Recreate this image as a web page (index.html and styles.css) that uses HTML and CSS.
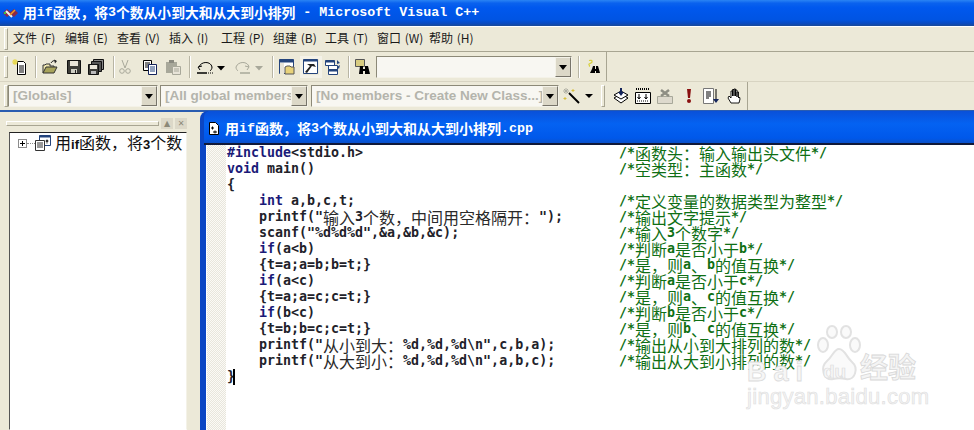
FILE: index.html
```html
<!DOCTYPE html>
<html lang="zh-CN">
<head>
<meta charset="utf-8">
<title>Microsoft Visual C++</title>
<link rel="stylesheet" href="styles.css">
</head>
<body>
<div class="app">
  <header class="titlebar">
    <svg class="ico16" viewBox="0 0 17 14"><path d="M1 7l4-4 3.500 3 3.500-3 4 4-4 4-3.500-3L5 11z" fill="#8a2a4a"/><path d="M4 5l6 6" stroke="#f0f0f0" stroke-width="2"/><path d="M13 4L8 9" stroke="#f0a020" stroke-width="1.500"/><path d="M2 7h2" stroke="#40c040" stroke-width="2"/></svg>
    <span class="title-text"><span class="cj">用</span>if<span class="cj">函数，将</span>3<span class="cj">个数从小到大和从大到小排列</span> - Microsoft Visual C++</span>
  </header>

  <nav class="bar menubar">
    <i class="grip"></i>
    <span class="menu">文件 (F)</span><span class="menu">编辑 (E)</span><span class="menu">查看 (V)</span><span class="menu">插入 (I)</span><span class="menu">工程 (P)</span><span class="menu">组建 (B)</span><span class="menu">工具 (T)</span><span class="menu">窗口 (W)</span><span class="menu">帮助 (H)</span>
  </nav>

  <div class="bar toolrow row1">
    <div class="tools tools1">
      <i class="grip"></i>
      <svg class="ico ml4" viewBox="0 0 16 16"><path d="M5.500 2.500h6l2 2v11h-8z" fill="#fff" stroke="#000"/><path d="M7 7h5M7 9h5M7 11h5M7 13h5" stroke="#000"/><path d="M3 0v6M0 3h6M1 1l4 4M5 1L1 5" stroke="#e8d850" stroke-width="1.200"/></svg>
      <i class="sep ml7"></i>
      <svg class="ico ml6" viewBox="0 0 16 16"><path d="M1 14V6h2l1-1h4v2h4v1" fill="#f0e8b0" stroke="#333"/><path d="M1 14l3-6h11l-3 6z" fill="#a8a45c" stroke="#333"/><path d="M9 4c1-2 3-3 5-2" fill="none" stroke="#222"/><path d="M12 .5l3 1.500-2 2.500z" fill="#222"/></svg>
      <svg class="ico ml8" viewBox="0 0 16 16"><path d="M1.500 1.500h13v13h-13z" fill="#3c3c38" stroke="#111"/><path d="M4 2h8v5H4z" fill="#e8e4d8"/><path d="M5 10h6v4H5z" fill="#cfcfc4"/><path d="M9 11h1v3H9z" fill="#222"/></svg>
      <svg class="ico ml6" viewBox="0 0 16 16"><path d="M5.500 .5h10v10h-10z" fill="#888" stroke="#111"/><path d="M3.500 2.500h10v10h-10z" fill="#555" stroke="#111"/><path d="M.5 5.500h10v10H.5z" fill="#3c3c38" stroke="#111"/><path d="M2 6h7v4H2z" fill="#e8e4d8"/><path d="M3 12h5v3H3z" fill="#bbb"/></svg>
      <i class="sep ml9"></i>
      <svg class="ico ml3" viewBox="0 0 16 16"><path d="M5 1l3 8M11 1L8 9" stroke="#a8a89a" fill="none"/><circle cx="5" cy="12" r="2.300" fill="none" stroke="#a8a89a"/><circle cx="11" cy="12" r="2.300" fill="none" stroke="#a8a89a"/></svg>
      <svg class="ico ml9" viewBox="0 0 16 16"><path d="M1.500 1.500h8v10h-8z" fill="#fff" stroke="#000"/><path d="M3 4h5M3 6h5M3 8h5" stroke="#000"/><path d="M6.500 5.500h8v10h-8z" fill="#fff" stroke="#14245c"/><path d="M8 8h5M8 10h5M8 12h5" stroke="#24447c"/></svg>
      <svg class="ico ml7" viewBox="0 0 16 16"><path d="M1 3h11v11H1z" fill="#a8a89a"/><path d="M4 1h5v3H4z" fill="#8a8a80"/><path d="M7.500 7.500h8v8h-8z" fill="#e8e4d8" stroke="#a8a89a"/><path d="M9 10h5M9 12h5" stroke="#a8a89a"/></svg>
      <i class="sep ml8"></i>
      <svg class="ico wide ml7" viewBox="0 0 30 16"><path d="M0 14h10" stroke="#000" stroke-width="1.500"/><path d="M11 14h5" stroke="#000" stroke-dasharray="1 1"/><path d="M1 8l2 3M1 8l4-1" stroke="#000" fill="none"/><path d="M2 8c2-6 12-6 13 0 0 2-1 3-2 4" fill="none" stroke="#000"/><path d="M20 7h8l-4 4.500z" fill="#000"/></svg>
      <svg class="ico wide ml7" viewBox="0 0 30 16"><path d="M6 14h10" stroke="#a8a89a" stroke-width="1.500"/><path d="M15 8c-1-6-11-6-13 0 0 2 1 3 2 4" fill="none" stroke="#a8a89a"/><path d="M15 8l-2 3M15 8l-4-1" stroke="#a8a89a" fill="none"/><path d="M21 7h8l-4 4.500z" fill="#a8a89a"/></svg>
      <i class="sep ml8"></i>
      <svg class="ico ml6" viewBox="0 0 16 16"><path d="M.5 .5h14v14H.5z" fill="#fff" stroke="#24447c"/><path d="M.5 .5h14v3H.5z" fill="#24447c"/><path d="M1 4h4v11H1z" fill="#e8e4d8"/><path d="M6 8l2-1h3l1 1h3v7H6z" fill="#e8d27a" stroke="#555"/></svg>
      <svg class="ico ml8 on" viewBox="0 0 16 16"><path d="M.5 .5h14v14H.5z" fill="#fff" stroke="#24447c"/><path d="M.5 .5h14v2H.5z" fill="#24447c"/><path d="M4 5h7l2 3-4-1-5 7-2-1 5-6z" fill="#222"/></svg>
      <svg class="ico ml6" viewBox="0 0 16 16"><path d="M.5 1.500h9v5h-9zM3.500 6.500h9v4h-9zM3.500 10.500h9v5h-9z" fill="#fff" stroke="#24447c"/><path d="M.5 1.500h9v2h-9zM3.500 10.500h9v2h-9z" fill="#24447c"/><path d="M12 1l3 3-3 1zM12 8l3-2-1 4z" fill="#24447c"/></svg>
      <i class="sep ml7"></i>
      <svg class="ico ml6" viewBox="0 0 16 16"><path d="M.5 .5h9v7h-9z" fill="#d8cc80" stroke="#555"/><path d="M5 7h3v3h2V7h3l2 8h-5v-3H8v3H4z" fill="#000"/></svg>
      <div class="combo find ml5"><span class="combo-text"></span><b class="drop"></b></div>
      <i class="sep ml6"></i>
      <svg class="ico ml7" viewBox="0 0 16 16"><path d="M3 1.500c4-1 4 2 1 3s1 2-1 3" fill="none" stroke="#d8d040" stroke-width="1.200"/><path d="M6 10l1-3h2v3h1V7h2l2 7h-4v-2H9v2H4z" fill="#000"/></svg>
    </div>
  </div>

  <div class="bar toolrow row2">
    <div class="tools tools2">
      <i class="grip"></i>
      <div class="combo c1"><span class="combo-text">[Globals]</span><b class="drop"></b></div>
      <div class="combo c2 ml2"><span class="combo-text">[All global members</span><b class="drop"></b></div>
      <div class="combo c3 ml3"><span class="combo-text">[No members - Create New Class...]</span><b class="drop"></b></div>
      <svg class="ico wide ml4" viewBox="0 0 30 16"><path d="M6 5l10 10" stroke="#000" stroke-width="2"/><path d="M3 0v6M0 3h6M1 1l4 4M5 1L1 5" stroke="#b0b0a4" stroke-width="1"/><path d="M10 1v3M8.500 2.500h3M2 9v3M.5 10.500h3" stroke="#d8c040"/><path d="M22 6h8l-4 4z" fill="#000"/></svg>
      <i class="grip ml8"></i>
      <svg class="ico ml8" viewBox="0 0 16 16"><path d="M1 10l7-4 7 4-7 5z" fill="#fff" stroke="#000"/><path d="M1 7l7-4 7 4-7 4z" fill="#fff" stroke="#000"/><path d="M8 0v6" stroke="#14245c" stroke-width="2"/><path d="M5 4h6L8 8z" fill="#14245c"/></svg>
      <svg class="ico ml6" viewBox="0 0 16 16"><path d="M.5 4.500h15v11H.5z" fill="#fff" stroke="#000"/><path d="M1 1h14" stroke="#000" stroke-dasharray="1 1" stroke-width="2"/><path d="M4 6v5M2.500 9L4 11l1.500-2M11 6v5M9.500 9l1.500 2 1.500-2" fill="none" stroke="#000"/><path d="M2 13h12" stroke="#000" stroke-dasharray="1 1"/></svg>
      <svg class="ico ml6" viewBox="0 0 16 16"><path d="M.5 8.500h15v7H.5z" fill="#ddd9cd" stroke="#a8a89a"/><path d="M4 2l8 6M12 2L4 8" stroke="#8e8e84" stroke-width="2.500"/></svg>
      <svg class="ico ml8" viewBox="0 0 16 16"><path d="M6 1h4l-1 9H7z" fill="#8a1010"/><circle cx="8" cy="13" r="2" fill="#8a1010"/></svg>
      <svg class="ico ml6" viewBox="0 0 16 16"><path d="M.5 .5h10v15H.5z" fill="#fff" stroke="#777"/><path d="M3 4h5M3 6h5M3 8h5M3 10h3" stroke="#000"/><path d="M13 1v12" stroke="#000"/><path d="M10 11h6l-3 4z" fill="#14245c"/></svg>
      <svg class="ico ml8" viewBox="0 0 16 16"><path d="M4 15l-3-5 1-2 2 2V3h1.500v5V1.500H7V8V1H8.500v7V2H10v7V4h1.500v6l1-1 .5 2-1 4z" fill="#fff" stroke="#000" stroke-width=".9"/></svg>
    </div>
  </div>

  <main class="workspace">
    <aside class="side">
      <div class="side-head">
        <i class="hgrip"></i>
        <b class="mini">▲</b><b class="mini">✕</b>
      </div>
      <div class="tree">
        <div class="tree-row">
          <i class="plus"></i><i class="dots"></i>
          <svg class="tree-ico" viewBox="0 0 16 16"><path d="M4.500 .5h11v10h-11z" fill="#fff" stroke="#24447c"/><path d="M4.500 .5h11v2h-11z" fill="#24447c"/><path d="M.5 5.500h9v10h-9z" fill="#fff" stroke="#333"/><path d="M2 8h6M2 10h6M2 12h6" stroke="#333"/><path d="M11 5h2v2h-2zM11 8h2" fill="#333" stroke="#333" stroke-width=".5"/></svg>
          <span class="tree-label">用<b>if</b>函数，将<b>3</b>个数</span>
        </div>
      </div>
    </aside>

    <section class="doc">
      <div class="doc-title">
        <svg class="doc-ico" viewBox="0 0 12 14"><path d="M1.500 .5h6l3 3v9h-9z" fill="#fff" stroke="#000"/><path d="M3 6h3M4.500 4.500v3M5 10h4M7 8.500v3" stroke="#000"/></svg>
        <span class="doc-name"><span class="cj">用</span>if<span class="cj">函数，将</span>3<span class="cj">个数从小到大和从大到小排列</span>.cpp</span>
      </div>
      <div class="editor">
        <div class="margin"></div>
        <div class="code">
          <div class="ln"><span class="src"><span class="kw">#include</span>&lt;stdio.h&gt;</span><span class="cm">/*<span class="cj">函数头：输入输出头文件</span>*/</span></div>
          <div class="ln"><span class="src"><span class="kw">void</span> main()</span><span class="cm">/*<span class="cj">空类型：主函数</span>*/</span></div>
          <div class="ln"><span class="src">{</span></div>
          <div class="ln"><span class="src in"><span class="kw">int</span> a,b,c,t;</span><span class="cm">/*<span class="cj">定义变量的数据类型为整型</span>*/</span></div>
          <div class="ln"><span class="src in">printf("<span class="cj">输入</span>3<span class="cj">个数，中间用空格隔开：</span>");</span><span class="cm">/*<span class="cj">输出文字提示</span>*/</span></div>
          <div class="ln"><span class="src in">scanf("%d%d%d",&amp;a,&amp;b,&amp;c);</span><span class="cm">/*<span class="cj">输入</span>3<span class="cj">个数字</span>*/</span></div>
          <div class="ln"><span class="src in"><span class="kw">if</span>(a&lt;b)</span><span class="cm">/*<span class="cj">判断</span>a<span class="cj">是否小于</span>b*/</span></div>
          <div class="ln"><span class="src in">{t=a;a=b;b=t;}</span><span class="cm">/*<span class="cj">是，则</span>a<span class="cj">、</span>b<span class="cj">的值互换</span>*/</span></div>
          <div class="ln"><span class="src in"><span class="kw">if</span>(a&lt;c)</span><span class="cm">/*<span class="cj">判断</span>a<span class="cj">是否小于</span>c*/</span></div>
          <div class="ln"><span class="src in">{t=a;a=c;c=t;}</span><span class="cm">/*<span class="cj">是，则</span>a<span class="cj">、</span>c<span class="cj">的值互换</span>*/</span></div>
          <div class="ln"><span class="src in"><span class="kw">if</span>(b&lt;c)</span><span class="cm">/*<span class="cj">判断</span>b<span class="cj">是否小于</span>c*/</span></div>
          <div class="ln"><span class="src in">{t=b;b=c;c=t;}</span><span class="cm">/*<span class="cj">是，则</span>b<span class="cj">、</span>c<span class="cj">的值互换</span>*/</span></div>
          <div class="ln"><span class="src in">printf("<span class="cj">从小到大：</span>%d,%d,%d\n",c,b,a);</span><span class="cm">/*<span class="cj">输出从小到大排列的数</span>*/</span></div>
          <div class="ln"><span class="src in">printf("<span class="cj">从大到小：</span>%d,%d,%d\n",a,b,c);</span><span class="cm">/*<span class="cj">输出从大到小排列的数</span>*/</span></div>
          <div class="ln"><span class="src caret">}</span></div>
        </div>
        <div class="mark">
          <svg class="paw" viewBox="0 0 46 58"><g fill="#f8f8f8" fill-opacity=".75" stroke="#e2e2e2" stroke-width="2"><ellipse cx="6" cy="20" rx="5" ry="7"/><ellipse cx="15" cy="7" rx="5" ry="6"/><ellipse cx="29" cy="7" rx="5" ry="6"/><ellipse cx="38" cy="20" rx="5" ry="7"/><path d="M22 24c-5 0-6 7-12 12-7 6-4 20 6 18 4-1 8-1 13 0 9 2 13-11 6-17-6-5-7-13-13-13z"/></g></svg>
          <span class="mk-baidu">Bai</span><span class="mk-du">du</span><span class="mk-jy">经验</span>
          <span class="mk-url">jingyan.baidu.com</span>
        </div>
      </div>
    </section>
  </main>
</div>
</body>
</html>
```
FILE: styles.css
```css
* { box-sizing: border-box; }
html, body { margin: 0; padding: 0; }
body { width: 974px; height: 430px; overflow: hidden; background: #ece9d8; font-family: "Noto Sans CJK SC", "Liberation Sans", sans-serif; }
.app { width: 974px; height: 430px; display: flex; flex-direction: column; overflow: hidden; }
.cj { display: inline-block; height: 16px; vertical-align: top; font-family: "Noto Sans CJK SC", sans-serif; font-weight: 400; font-size: 16px; letter-spacing: 0; line-height: 16px; }

.ml2 { margin-left: 2px; }
.ml3 { margin-left: 3px; }
.ml4 { margin-left: 4px; }
.ml5 { margin-left: 5px; }
.ml6 { margin-left: 6px; }
.ml7 { margin-left: 7px; }
.ml8 { margin-left: 8px; }
.ml9 { margin-left: 9px; }

.titlebar { height: 26px; flex: none; display: flex; align-items: center; gap: 4px; padding: 0 0 0 2px; background: linear-gradient(#2a84f4 0, #0a62ee 12%, #0058ee 30%, #0054e3 75%, #0a4ac0 90%, #1a4a98 100%); color: #fff; }
.ico16 { width: 17px; height: 14px; flex: none; }
.title-text { font: 700 13.33px/16px "Liberation Mono", monospace; white-space: pre; }
.title-text .cj { font-weight: 700; font-size: 13.8px; position: relative; top: -1px; }

.bar { background: #ece9d8; flex: none; }
.menubar { height: 26px; display: flex; align-items: center; padding-left: 4px; border-bottom: 1px solid #a8a592; box-shadow: inset 0 1px 0 #fff; }
.grip { display: block; width: 4px; height: 22px; flex: none; border: 1px solid; border-color: #fff #a8a592 #a8a592 #fff; }
.menubar .grip { margin-right: 5px; }
.menu { width: 52px; flex: none; font-size: 12px; color: #1a1a1a; white-space: pre; line-height: 18px; word-spacing: 1px; margin-top: -2px; }

.toolrow { display: flex; align-items: stretch; }
.row1 { height: 30px; border-bottom: 1px solid #d8d4c2; }
.row2 { height: 30px; border-bottom: 2px solid #2a5cb0; }
.tools { display: flex; align-items: center; padding-left: 4px; border-right: 1px solid #a8a592; }
.tools1 { width: 607px; }
.tools2 { width: 748px; }
.sep { display: block; width: 1px; height: 22px; flex: none; background: #b8b5a4; box-shadow: 1px 0 0 #fff; }
.ico { width: 16px; height: 16px; flex: none; }
.ico.wide { width: 30px; }
.ico.on { outline: 3px solid #f4f2e8; }

.combo { display: flex; align-items: stretch; height: 22px; flex: none; background: #fff; border: 1px solid; border-color: #8c8978 #f4f2e8 #f4f2e8 #8c8978; overflow: hidden; }
.combo-text { flex: 1; min-width: 0; padding-left: 4px; font: 700 13.5px/20px "Liberation Sans", sans-serif; color: #b4b4ac; white-space: nowrap; overflow: hidden; background: #f8f7f2; }
.drop { position: relative; width: 16px; flex: none; background: #dcd8c8; border: 1px solid; border-color: #f4f2e8 #77746a #77746a #f4f2e8; }
.drop::after { content: ""; position: absolute; left: 3px; top: 7px; border: 4px solid transparent; border-top: 5px solid #000; border-bottom: 0; }
.find { width: 196px; }
.c1 { width: 150px; }
.c2 { width: 148px; }
.c3 { width: 248px; }

.workspace { flex: 1; display: flex; min-height: 0; }
.side { width: 189px; flex: none; display: flex; flex-direction: column; padding-top: 5px; }
.side-head { height: 13px; display: flex; align-items: center; gap: 2px; padding: 0 2px 0 6px; margin-bottom: 2px; }
.hgrip { flex: 1; height: 5px; border: 1px solid; border-color: #fff #a8a592 #a8a592 #fff; }
.mini { width: 12px; height: 11px; font: 400 8px/11px "DejaVu Sans", sans-serif; color: #8c8978; text-align: center; background: #dcd8c8; }
.tree { flex: 1; margin-left: 9px; margin-right: 2px; background: #fff; border: 1px solid; border-color: #222 #f4f2e8 transparent #555; }
.tree-row { display: flex; align-items: center; height: 18px; margin-top: 1px; padding-left: 8px; }
.plus { position: relative; display: block; width: 9px; height: 9px; flex: none; border: 1px solid #8c8c8c; }
.plus::before { content: ""; position: absolute; left: 1px; top: 3px; width: 5px; height: 1px; background: #000; }
.plus::after { content: ""; position: absolute; left: 3px; top: 1px; width: 1px; height: 5px; background: #000; }
.dots { display: block; width: 8px; border-top: 1px dotted #888; flex: none; }
.tree-ico { width: 16px; height: 16px; flex: none; }
.tree-label { margin-left: 4px; font-size: 16px; color: #111; white-space: nowrap; line-height: 18px; }
.tree-label b { font: 700 13px/16px "Liberation Sans", sans-serif; }

.doc { flex: 1; margin-left: 11px; display: flex; flex-direction: column; min-width: 0; border-left: 6px solid #0b46c4; border-top-left-radius: 8px; background: linear-gradient(#0a5fe0, #0054e3); position: relative; margin-top: -1px; box-shadow: inset 1px 0 0 #0a3aa8; }
.doc-title { height: 34px; flex: none; display: flex; align-items: center; gap: 5px; color: #fff; border-bottom: 2px solid #101838; background: linear-gradient(#0a50d8, #0462f2 40%, #0058ea 85%, #0a50c8); margin-left: -2px; padding: 3px 0 0 4px; border-top-left-radius: 6px; }
.doc-ico { width: 12px; height: 14px; flex: none; }
.doc-name { font: 700 13.33px/16px "Liberation Mono", monospace; white-space: pre; }
.doc-name .cj { font-weight: 700; font-size: 14px; position: relative; top: -1px; }

.editor { flex: 1; position: relative; display: flex; background: #fff; overflow: hidden; min-height: 0; }
.margin { width: 19px; flex: none; margin-left: 1px; background: repeating-conic-gradient(#e8e6dc 0 25%, #fbfaf6 0 50%) 0 0 / 2px 2px; }
.code { flex: 1; }
.ln { display: flex; height: 16px; font: 700 13.3px/16px "DejaVu Sans Mono", monospace; color: #22222a; white-space: pre; margin-left: 1px; }
.src { width: 392px; flex: none; }
.src.in { padding-left: 32px; }
.src .cj { color: #2a2a2a; }
.kw { color: #1a1a78; }
.cm { color: #0f6f14; }
.caret { position: relative; }
.caret::after { content: ""; position: absolute; left: 6px; top: 0; width: 2px; height: 16px; background: #000; }

.mark { position: absolute; left: 541px; top: 180px; width: 180px; height: 84px; pointer-events: none; }
.paw { position: absolute; left: 70px; top: 0; width: 46px; height: 58px; }
.mk-baidu { position: absolute; left: 0; top: 32px; font: 700 27px/30px "Liberation Sans", sans-serif; letter-spacing: 7px; color: #f6f6f6; -webkit-text-stroke: .8px #dcdcdc; }
.mk-du { position: absolute; left: 76px; top: 36px; font: 700 19px/22px "Liberation Sans", sans-serif; color: #f6f6f6; -webkit-text-stroke: .7px #dcdcdc; }
.mk-jy { position: absolute; left: 113px; top: 23px; font: 700 28px/36px "Noto Sans CJK SC", sans-serif; color: #f4f4f4; -webkit-text-stroke: .8px #d8d8d8; }
.mk-url { position: absolute; left: 0; top: 60px; font: 400 22px/24px "Liberation Sans", sans-serif; color: #f4f4f4; -webkit-text-stroke: .6px #dedede; letter-spacing: .3px; white-space: nowrap; }
```
